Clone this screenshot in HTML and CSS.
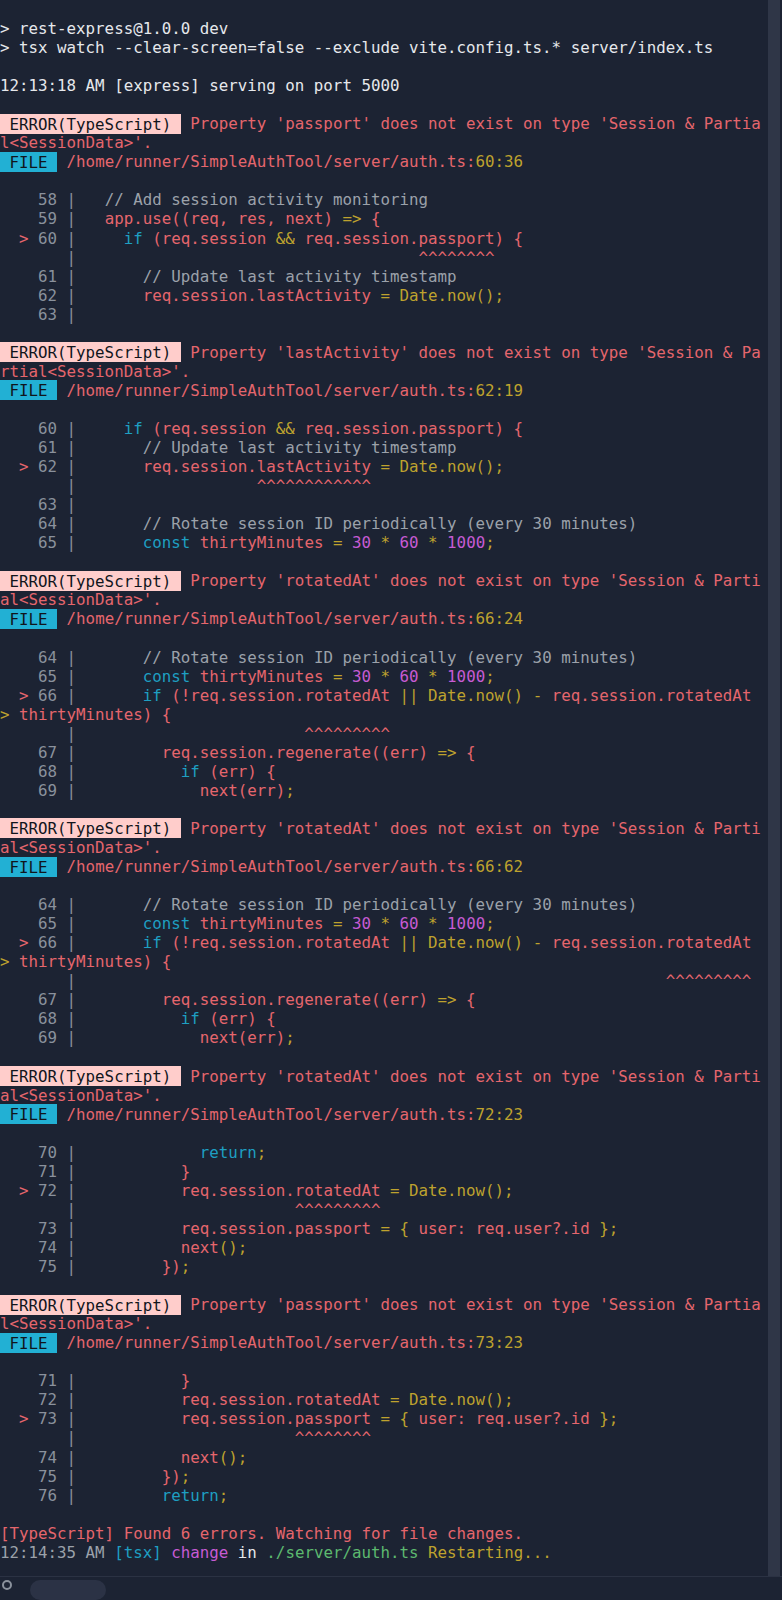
FILE: index.html
```html
<!DOCTYPE html>
<html lang="en">
<head>
    <meta charset="UTF-8">
    <meta name="viewport" content="width=device-width, initial-scale=1.0">
    <title>Console</title>
    <link rel="stylesheet" href="styles.css">
</head>
<body>
<div class="window">
    <div class="pane">
<pre class="term"><span class="w">&gt; rest-express@1.0.0 dev</span>
<span class="w">&gt; tsx watch --clear-screen=false --exclude vite.config.ts.* server/index.ts</span>

<span class="w">12:13:18 AM [express] serving on port 5000</span>

<span class="err"> ERROR(TypeScript) </span> <span class="r">Property 'passport' does not exist on type 'Session &amp; Partia</span>
<span class="r">l&lt;SessionData&gt;'.</span>
<span class="file"> FILE </span> <span class="r">/home/runner/SimpleAuthTool/server/auth.ts:</span><span class="y">60:36</span>

<span class="g">    58 | </span>  <span class="cm">// Add session activity monitoring</span>
<span class="g">    59 | </span>  <span class="r">app.use((req, res, next) </span><span class="y">=&gt;</span><span class="r"> {</span>
<span class="mk">  &gt; </span><span class="g">60 | </span>    <span class="c">if</span><span class="r"> (req.session </span><span class="y">&amp;&amp;</span><span class="r"> req.session.passport) {</span>
<span class="g">       |</span>                                    <span class="r">^^^^^^^^</span>
<span class="g">    61 | </span>      <span class="cm">// Update last activity timestamp</span>
<span class="g">    62 | </span>      <span class="r">req.session.lastActivity </span><span class="y">= Date.now();</span>
<span class="g">    63 |</span>

<span class="err"> ERROR(TypeScript) </span> <span class="r">Property 'lastActivity' does not exist on type 'Session &amp; Pa</span>
<span class="r">rtial&lt;SessionData&gt;'.</span>
<span class="file"> FILE </span> <span class="r">/home/runner/SimpleAuthTool/server/auth.ts:</span><span class="y">62:19</span>

<span class="g">    60 | </span>    <span class="c">if</span><span class="r"> (req.session </span><span class="y">&amp;&amp;</span><span class="r"> req.session.passport) {</span>
<span class="g">    61 | </span>      <span class="cm">// Update last activity timestamp</span>
<span class="mk">  &gt; </span><span class="g">62 | </span>      <span class="r">req.session.lastActivity </span><span class="y">= Date.now();</span>
<span class="g">       |</span>                   <span class="r">^^^^^^^^^^^^</span>
<span class="g">    63 |</span>
<span class="g">    64 | </span>      <span class="cm">// Rotate session ID periodically (every 30 minutes)</span>
<span class="g">    65 | </span>      <span class="c">const</span><span class="r"> thirtyMinutes </span><span class="y">=</span> <span class="m">30</span> <span class="y">*</span> <span class="m">60</span> <span class="y">*</span> <span class="m">1000</span><span class="y">;</span>

<span class="err"> ERROR(TypeScript) </span> <span class="r">Property 'rotatedAt' does not exist on type 'Session &amp; Parti</span>
<span class="r">al&lt;SessionData&gt;'.</span>
<span class="file"> FILE </span> <span class="r">/home/runner/SimpleAuthTool/server/auth.ts:</span><span class="y">66:24</span>

<span class="g">    64 | </span>      <span class="cm">// Rotate session ID periodically (every 30 minutes)</span>
<span class="g">    65 | </span>      <span class="c">const</span><span class="r"> thirtyMinutes </span><span class="y">=</span> <span class="m">30</span> <span class="y">*</span> <span class="m">60</span> <span class="y">*</span> <span class="m">1000</span><span class="y">;</span>
<span class="mk">  &gt; </span><span class="g">66 | </span>      <span class="c">if</span><span class="r"> (!req.session.rotatedAt </span><span class="y">|| Date.now() -</span><span class="r"> req.session.rotatedAt</span>
<span class="y">&gt;</span><span class="r"> thirtyMinutes) {</span>
<span class="g">       |</span>                        <span class="r">^^^^^^^^^</span>
<span class="g">    67 | </span>        <span class="r">req.session.regenerate((err) </span><span class="y">=&gt;</span><span class="r"> {</span>
<span class="g">    68 | </span>          <span class="c">if</span><span class="r"> (err) {</span>
<span class="g">    69 | </span>            <span class="r">next(err)</span><span class="y">;</span>

<span class="err"> ERROR(TypeScript) </span> <span class="r">Property 'rotatedAt' does not exist on type 'Session &amp; Parti</span>
<span class="r">al&lt;SessionData&gt;'.</span>
<span class="file"> FILE </span> <span class="r">/home/runner/SimpleAuthTool/server/auth.ts:</span><span class="y">66:62</span>

<span class="g">    64 | </span>      <span class="cm">// Rotate session ID periodically (every 30 minutes)</span>
<span class="g">    65 | </span>      <span class="c">const</span><span class="r"> thirtyMinutes </span><span class="y">=</span> <span class="m">30</span> <span class="y">*</span> <span class="m">60</span> <span class="y">*</span> <span class="m">1000</span><span class="y">;</span>
<span class="mk">  &gt; </span><span class="g">66 | </span>      <span class="c">if</span><span class="r"> (!req.session.rotatedAt </span><span class="y">|| Date.now() -</span><span class="r"> req.session.rotatedAt</span>
<span class="y">&gt;</span><span class="r"> thirtyMinutes) {</span>
<span class="g">       |</span>                                                              <span class="r">^^^^^^^^^</span>
<span class="g">    67 | </span>        <span class="r">req.session.regenerate((err) </span><span class="y">=&gt;</span><span class="r"> {</span>
<span class="g">    68 | </span>          <span class="c">if</span><span class="r"> (err) {</span>
<span class="g">    69 | </span>            <span class="r">next(err)</span><span class="y">;</span>

<span class="err"> ERROR(TypeScript) </span> <span class="r">Property 'rotatedAt' does not exist on type 'Session &amp; Parti</span>
<span class="r">al&lt;SessionData&gt;'.</span>
<span class="file"> FILE </span> <span class="r">/home/runner/SimpleAuthTool/server/auth.ts:</span><span class="y">72:23</span>

<span class="g">    70 | </span>            <span class="c">return</span><span class="y">;</span>
<span class="g">    71 | </span>          <span class="r">}</span>
<span class="mk">  &gt; </span><span class="g">72 | </span>          <span class="r">req.session.rotatedAt </span><span class="y">= Date.now();</span>
<span class="g">       |</span>                       <span class="r">^^^^^^^^^</span>
<span class="g">    73 | </span>          <span class="r">req.session.passport </span><span class="y">= {</span><span class="r"> user: req.user?.id </span><span class="y">};</span>
<span class="g">    74 | </span>          <span class="r">next</span><span class="y">();</span>
<span class="g">    75 | </span>        <span class="r">})</span><span class="y">;</span>

<span class="err"> ERROR(TypeScript) </span> <span class="r">Property 'passport' does not exist on type 'Session &amp; Partia</span>
<span class="r">l&lt;SessionData&gt;'.</span>
<span class="file"> FILE </span> <span class="r">/home/runner/SimpleAuthTool/server/auth.ts:</span><span class="y">73:23</span>

<span class="g">    71 | </span>          <span class="r">}</span>
<span class="g">    72 | </span>          <span class="r">req.session.rotatedAt </span><span class="y">= Date.now();</span>
<span class="mk">  &gt; </span><span class="g">73 | </span>          <span class="r">req.session.passport </span><span class="y">= {</span><span class="r"> user: req.user?.id </span><span class="y">};</span>
<span class="g">       |</span>                       <span class="r">^^^^^^^^</span>
<span class="g">    74 | </span>          <span class="r">next</span><span class="y">();</span>
<span class="g">    75 | </span>        <span class="r">})</span><span class="y">;</span>
<span class="g">    76 | </span>        <span class="c">return</span><span class="y">;</span>

<span class="r">[TypeScript] Found 6 errors. Watching for file changes.</span>
<span class="cm">12:14:35 AM</span> <span class="c">[tsx]</span> <span class="m">change</span> <span class="w">in</span> <span class="gr">./server/auth.ts</span> <span class="y">Restarting...</span></pre>
        <div class="scroll"></div>
    </div>
    <div class="toolbar">
        <span class="tool-icon"></span>
        <span class="tool-pill"></span>
    </div>
</div>
</body>
</html>
```

FILE: styles.css
```css
body {
    margin: 0;
    background-color: #1c2333;
}
.window {
    display: flex;
    flex-direction: column;
    height: 1600px;
    overflow: hidden;
}
.pane {
    display: flex;
    height: 1589px;
}
.term {
    flex: 1;
    margin: 0;
    padding: 19px 0 0 0;
    font-family: "DejaVu Sans Mono", "Liberation Mono", monospace;
    font-size: 15.8px;
    line-height: 19.05px;
    color: #e6e8ec;
    white-space: pre;
    overflow: hidden;
}
.scroll {
    width: 12px;
    margin-right: 2px;
    background: #2f3647;
}
.toolbar {
    flex: 1;
    display: flex;
    gap: 18px;
    padding: 3px 0 0 2px;
    border-top: 1px solid #2b3243;
}
.tool-icon {
    width: 10px;
    height: 10px;
    border: 2px solid #8a919c;
    border-radius: 50%;
    box-sizing: border-box;
}
.tool-pill {
    width: 76px;
    height: 20px;
    border-radius: 10px;
    background: #2b3245;
}
.w { color: #e6e8ec; }
.r { color: #e5666d; }
.y { color: #bea22e; }
.c { color: #1e9fc2; }
.m { color: #c75bd3; }
.g { color: #8a919c; }
.cm { color: #9ba1aa; }
.gr { color: #5cb96f; }
.mk { color: #e5666d; }
.err {
    background: #ffcdcb;
    color: #11151c;
    padding: 0.5px 0;
}
.file {
    background: #22b0d4;
    color: #11151c;
    padding: 0.5px 0;
}
```
